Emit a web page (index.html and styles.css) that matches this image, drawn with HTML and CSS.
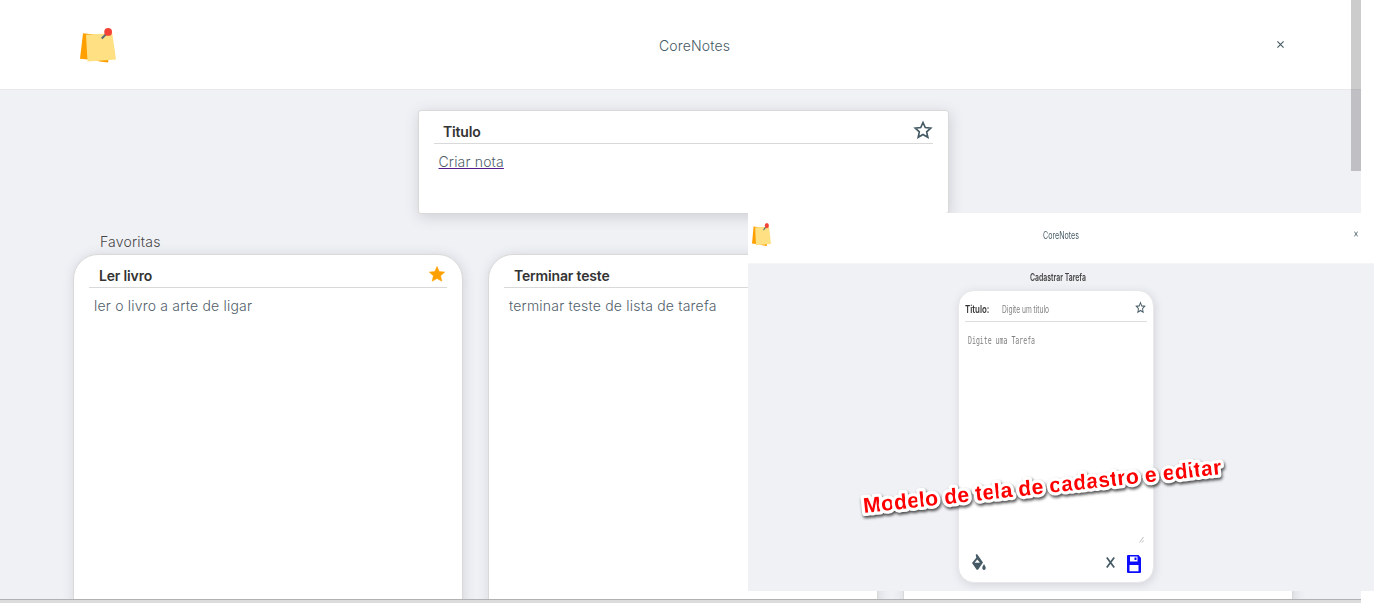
FILE: index.html
```html
<!DOCTYPE html>
<html lang="pt-BR">
<head>
<meta charset="utf-8">
<title>CoreNotes</title>
<link rel="stylesheet" href="styles.css">
</head>
<body>
<svg class="defs" width="0" height="0" aria-hidden="true">
  <symbol id="note" viewBox="0 0 48 48" preserveAspectRatio="none">
    <path fill="#ffa000" d="M4 7L31 10L33 44L0 41Z"/>
    <path fill="#ffa000" d="M14 40L38 41L37.500 46L26 44.500Z"/>
    <path fill="#ffe082" d="M8 9L43 7L48 42L10 44.500Z"/>
    <path stroke="#546e7a" stroke-width="2.600" d="M29 14L35 8"/>
    <circle cx="37.500" cy="5.200" r="5.200" fill="#f44336"/>
  </symbol>
  <symbol id="star" viewBox="0 0 24 24" preserveAspectRatio="none">
    <path d="M12 3l2.700 6 6.600.700-4.900 4.500 1.400 6.500-5.800-3.300-5.800 3.300 1.400-6.500L2.700 9.700l6.600-.7z"/>
  </symbol>
</svg>
<div class="page">
  <header class="topbar">
    <svg class="logo"><use href="#note"/></svg>
    <span class="brand">CoreNotes</span>
    <svg class="close" viewBox="0 0 8 8"><path d="M.5.500l7 7M7.500.500l-7 7"/></svg>
  </header>
  <main class="content">
    <section class="create">
      <div class="head"><b>Titulo</b><svg class="star"><use href="#star"/></svg></div>
      <a class="body" href="#"><span>Criar nota</span></a>
    </section>
    <h2 class="group">Favoritas</h2>
    <div class="cards">
      <article class="card">
        <div class="head"><b>Ler livro</b><svg class="star on"><use href="#star"/></svg></div>
        <p class="body">ler o livro a arte de ligar</p>
      </article>
      <article class="card">
        <div class="head"><b>Terminar teste</b></div>
        <p class="body">terminar teste de lista de tarefa</p>
      </article>
      <article class="card"></article>
    </div>
  </main>
  <div class="hscroll"></div>
  <div class="vscroll"></div>
</div>

<div class="inset">
  <div class="inset-top">
    <svg class="inset-logo"><use href="#note"/></svg>
    <span class="inset-brand"><i>CoreNotes</i></span>
    <svg class="inset-close" viewBox="0 0 4 6" preserveAspectRatio="none"><path d="M.3.500l3.400 5M3.700.500l-3.400 5"/></svg>
  </div>
  <div class="inset-main">
    <div class="inset-title"><i>Cadastrar Tarefa</i></div>
    <div class="form">
      <div class="form-head">
        <span class="label"><i>Titulo:</i></span>
        <span class="hint"><i>Digite um titulo</i></span>
        <svg class="form-star"><use href="#star"/></svg>
      </div>
      <div class="area">
        <span class="area-hint"><i>Digite uma Tarefa</i></span>
        <svg class="grip" viewBox="0 0 5 7"><path d="M.5 6.500L4.500 1M3 6.500L4.500 4.500"/></svg>
      </div>
      <div class="tools">
        <svg class="bucket" viewBox="0 0 14 17"><path fill-rule="evenodd" d="M3.700.8L5 0 11 8.400 6 15.800 4.700 15.800 0 9 4.300 3.800zM5.300 5.500L2.600 8.800H8z"/><path d="M12 10c1 1.700 1.700 2.800 1.700 4 0 1.200-.7 2-1.700 2s-1.700-.8-1.700-2c0-1.200.7-2.300 1.700-4z"/></svg>
        <svg class="cancel" viewBox="0 0 8 11" preserveAspectRatio="none"><path d="M.7.500l6.600 10M7.300.500L.7 10.500"/></svg>
        <svg class="save" viewBox="0 0 14 18"><path fill="#0c0cff" fill-rule="evenodd" d="M1 0H11.500L14 3V17Q14 18 13 18H1Q0 18 0 17V1Q0 0 1 0zM3 1.500V6.500H10.500V1.500zM2.500 10V16.300H11.500V10z"/><path fill="#0c0cff" d="M7.500 2.500h2v2.500h-2z"/></svg>
      </div>
    </div>
  </div>
</div>
<svg class="caption" width="400" height="90">
  <text x="20" y="65" textLength="360" transform="rotate(-6.200 20 65)">Modelo de tela de cadastro e editar</text>
</svg>
</body>
</html>
```

FILE: styles.css
```css
* { box-sizing: border-box; }
body { margin: 0; width: 1374px; height: 603px; overflow: hidden; position: relative; background: #fff; font: 14px/18px Inter, "Liberation Sans", sans-serif; color: #455a64; }
.defs { position: absolute; }
svg { display: block; flex: none; }
.page { position: relative; width: 1361px; height: 603px; background: #f0f1f5; overflow: hidden; display: flex; flex-direction: column; }
.topbar { height: 90px; flex: none; background: #fff; border-bottom: 1px solid #e9e9ea; display: grid; grid-template-columns: 1fr auto 1fr; align-items: center; padding: 0 77px 0 80px; }
.logo { width: 36px; height: 36px; margin-top: 3px; }
.brand { letter-spacing: .15px; margin-left: 25px; margin-top: 2px; font-weight: 350; }
.close { width: 7px; height: 7px; justify-self: end; fill: none; stroke: #455a64; stroke-width: 1.3; }
.content { height: 509px; overflow: hidden; padding: 20px 68px 0 73px; flex: none; }
.create { width: 531px; height: 104px; margin-left: 345px; padding: 0 15px; background: #fff; border: 1px solid #d9d9d9; border-radius: 3px; box-shadow: 1px 3px 14px rgba(80,85,100,.22); }
.head { height: 33px; border-bottom: 1px solid #d9d9d9; padding: 10px 0 0 9px; display: flex; justify-content: space-between; }
.card .head { padding-left: 10px; }
.head b { font-weight: 600; color: #333; line-height: 22px; letter-spacing: -.17px; }
.star { width: 20px; height: 20px; margin-top: -1px; fill: none; stroke: #455a64; stroke-width: 2; }
.star.on { fill: #ffa000; stroke: #ffa000; stroke-width: .6; }
.body { display: block; margin: 9px 0 0 4.500px; color: #50606a; font-weight: 300; letter-spacing: .16px; }
.card .body { margin-left: 5px; letter-spacing: .2px; }
a.body { text-decoration: underline #551a8b; }
.group { margin: 19px 0 3px 27px; font: inherit; font-weight: 350; color: #464646; letter-spacing: .2px; }
.cards { display: flex; gap: 25px; }
.card { width: 390px; height: 437px; flex: none; background: #fff; border: 1px solid #d9d9d9; border-radius: 25px; padding: 0 15px; box-shadow: 1px 1px 12px rgba(80,85,100,.18); }
.hscroll { height: 4px; flex: none; background: #dcdcdc; border-top: 1px solid #b0b1b2; }
.vscroll { position: absolute; right: 0; top: 0; width: 10px; height: 171px; background: rgba(0,0,0,.2); }

.inset { position: absolute; left: 748px; top: 213px; width: 626px; height: 378px; background: #f0f1f5; }
.inset i { font-style: normal; display: inline-block; white-space: nowrap; transform-origin: 0 50%; }
.inset-top { height: 51px; background: #fff; border-bottom: 1px solid #f5f5f6; display: flex; padding: 10px 15px 0 4px; }
.inset-logo { width: 19px; height: 24px; }
.inset-brand { margin: 3px 0 0 272px; width: 317px; flex: none; font-size: 10px; line-height: 18px; }
.inset-brand i { transform: scaleX(.71); }
.inset-close { width: 4px; height: 6px; margin: 8px 0 0 -6px; fill: none; stroke: #455a64; stroke-width: .8; }
.inset-title { height: 26px; padding: 4px 0 0 282px; font-size: 10px; line-height: 18px; font-weight: 600; color: #444; }
.inset-title i { transform: scaleX(.69); }
.form { margin-left: 210px; width: 196px; height: 293px; background: #fff; border: 1px solid #e8e8ea; border-radius: 16px; padding: 0 6px; box-shadow: 1px 2px 9px rgba(80,85,100,.18); display: flex; flex-direction: column; }
.form-head { height: 31px; border-bottom: 1px solid #dedede; display: flex; padding-top: 9px; flex: none; }
.label { width: 37px; font-size: 11px; font-weight: 600; color: #333; }
.label i { transform: scaleX(.72); }
.hint { width: 133px; font-size: 10px; color: #808080; }
.hint i { transform: scaleX(.665); }
.form-star { width: 11px; height: 13px; margin-top: 1px; fill: none; stroke: #455a64; stroke-width: 2; }
.area { height: 224px; display: flex; flex-direction: column; justify-content: space-between; padding: 10px 3px 3px 3px; }
.area-hint { font: 10px/18px "DejaVu Sans Mono", monospace; color: #808080; }
.area-hint i { transform: scaleX(.655); }
.grip { width: 5px; height: 7px; align-self: flex-end; fill: none; stroke: #aaa; stroke-width: .8; }
.tools { display: flex; padding: 8px 5px 0 7px; }
.bucket { width: 14px; height: 17px; fill: #455a64; }
.cancel { width: 9px; height: 11px; margin: 3px 0 0 120px; fill: none; stroke: #455a64; stroke-width: 1.5; }
.save { width: 14px; height: 18px; margin: 1px 0 0 11.500px; }
.caption { position: absolute; left: 844px; top: 448px; overflow: visible; filter: drop-shadow(1px 2px 1.5px rgba(0,0,0,.7)); }
.caption text { font: bold 21.3px "Liberation Sans", Arial, sans-serif; fill: #f00; stroke: #fff; stroke-width: 6.5px; stroke-linejoin: round; paint-order: stroke; }
```
